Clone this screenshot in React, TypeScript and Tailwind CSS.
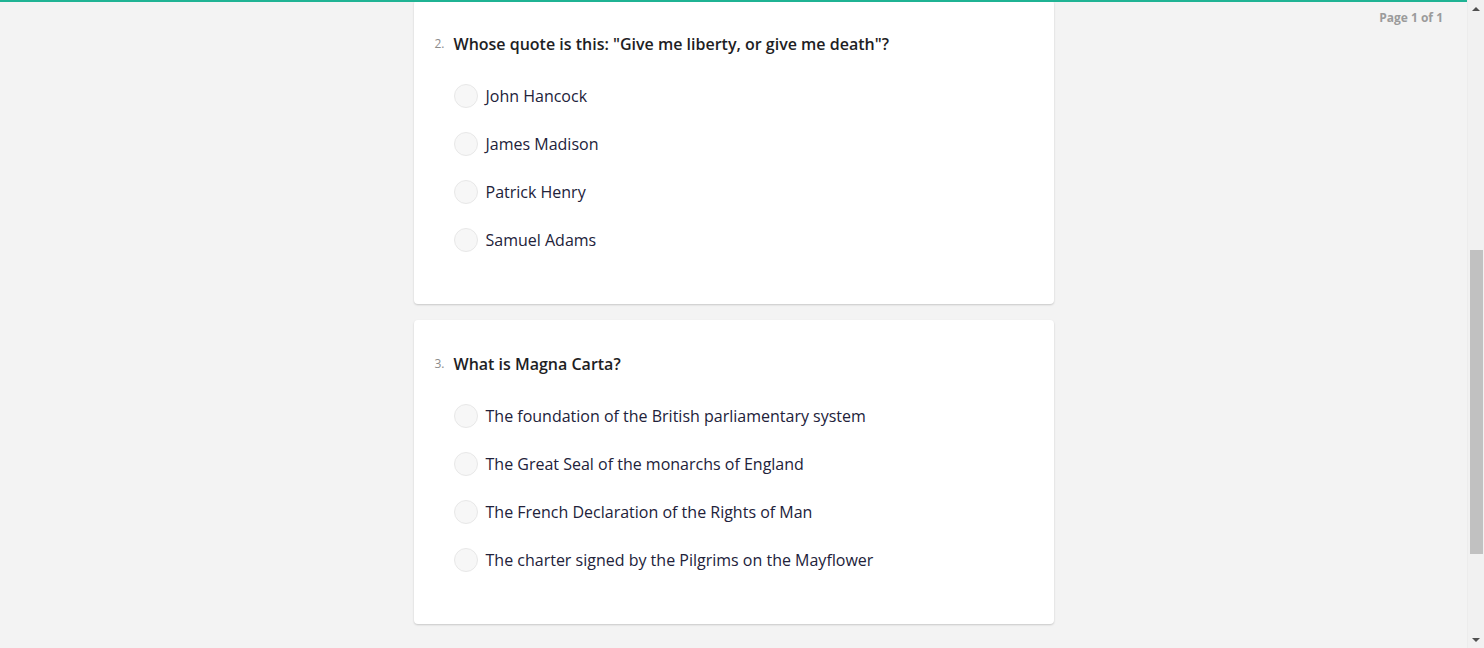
import React from 'react'

const questions = [
  {
    num: '2.',
    title: 'Whose quote is this: "Give me liberty, or give me death"?',
    options: ['John Hancock', 'James Madison', 'Patrick Henry', 'Samuel Adams'],
  },
  {
    num: '3.',
    title: 'What is Magna Carta?',
    options: [
      'The foundation of the British parliamentary system',
      'The Great Seal of the monarchs of England',
      'The French Declaration of the Rights of Man',
      'The charter signed by the Pilgrims on the Mayflower',
    ],
  },
]

function QuestionCard({ num, title, options }: { num: string; title: string; options: string[] }) {
  return (
    <div className="w-[640px] h-[304px] mx-auto bg-white rounded-[4px] shadow-[0_1px_2px_rgba(0,0,0,0.18)] pt-[32px] pl-[21px]">
      <div className="flex items-center h-[24px]">
        <span className="w-[19px] text-[12px] text-[#8c8c8c]">{num}</span>
        <h3 className="text-[16px] font-semibold text-[#1e1e24]">{title}</h3>
      </div>
      <div className="flex flex-col gap-[24px] pl-[19px] mt-[28px]">
        {options.map((o) => (
          <label key={o} className="flex items-center gap-[8px] h-[24px]">
            <span className="w-[24px] h-[24px] rounded-full bg-[#f7f7f7] border border-[#e8e8e8]" />
            <span className="text-[16px] text-[#22223a]">{o}</span>
          </label>
        ))}
      </div>
    </div>
  )
}

export default function App() {
  return (
    <div className="flex w-[1484px] h-[648px] overflow-hidden bg-[#f3f3f3]" style={{ fontFamily: '"Open Sans", sans-serif' }}>
      <div className="relative flex-1 flex flex-col gap-[16px]">
        <div className="absolute top-0 left-0 right-0 h-[2px] bg-[#1fb394] z-10" />
        <div className="absolute top-[9px] right-[24px] text-[12px] font-bold text-[#9b9b9b]">Page 1 of 1</div>
        {questions.map((q) => (
          <QuestionCard key={q.num} {...q} />
        ))}
      </div>
      <div className="w-[17px] flex flex-col items-center bg-[#f1f1f1] border-l border-[#ececec]">
        <div className="h-[17px] flex items-center justify-center">
          <div className="w-0 h-0 border-l-[4px] border-r-[4px] border-b-[4px] border-l-transparent border-r-transparent border-b-[#505050]" />
        </div>
        <div className="w-[13px] h-[304px] bg-[#c1c1c1] mt-[233px]" />
        <div className="flex-1" />
        <div className="h-[17px] flex items-center justify-center">
          <div className="w-0 h-0 border-l-[4px] border-r-[4px] border-t-[4px] border-l-transparent border-r-transparent border-t-[#505050]" />
        </div>
      </div>
    </div>
  )
}
